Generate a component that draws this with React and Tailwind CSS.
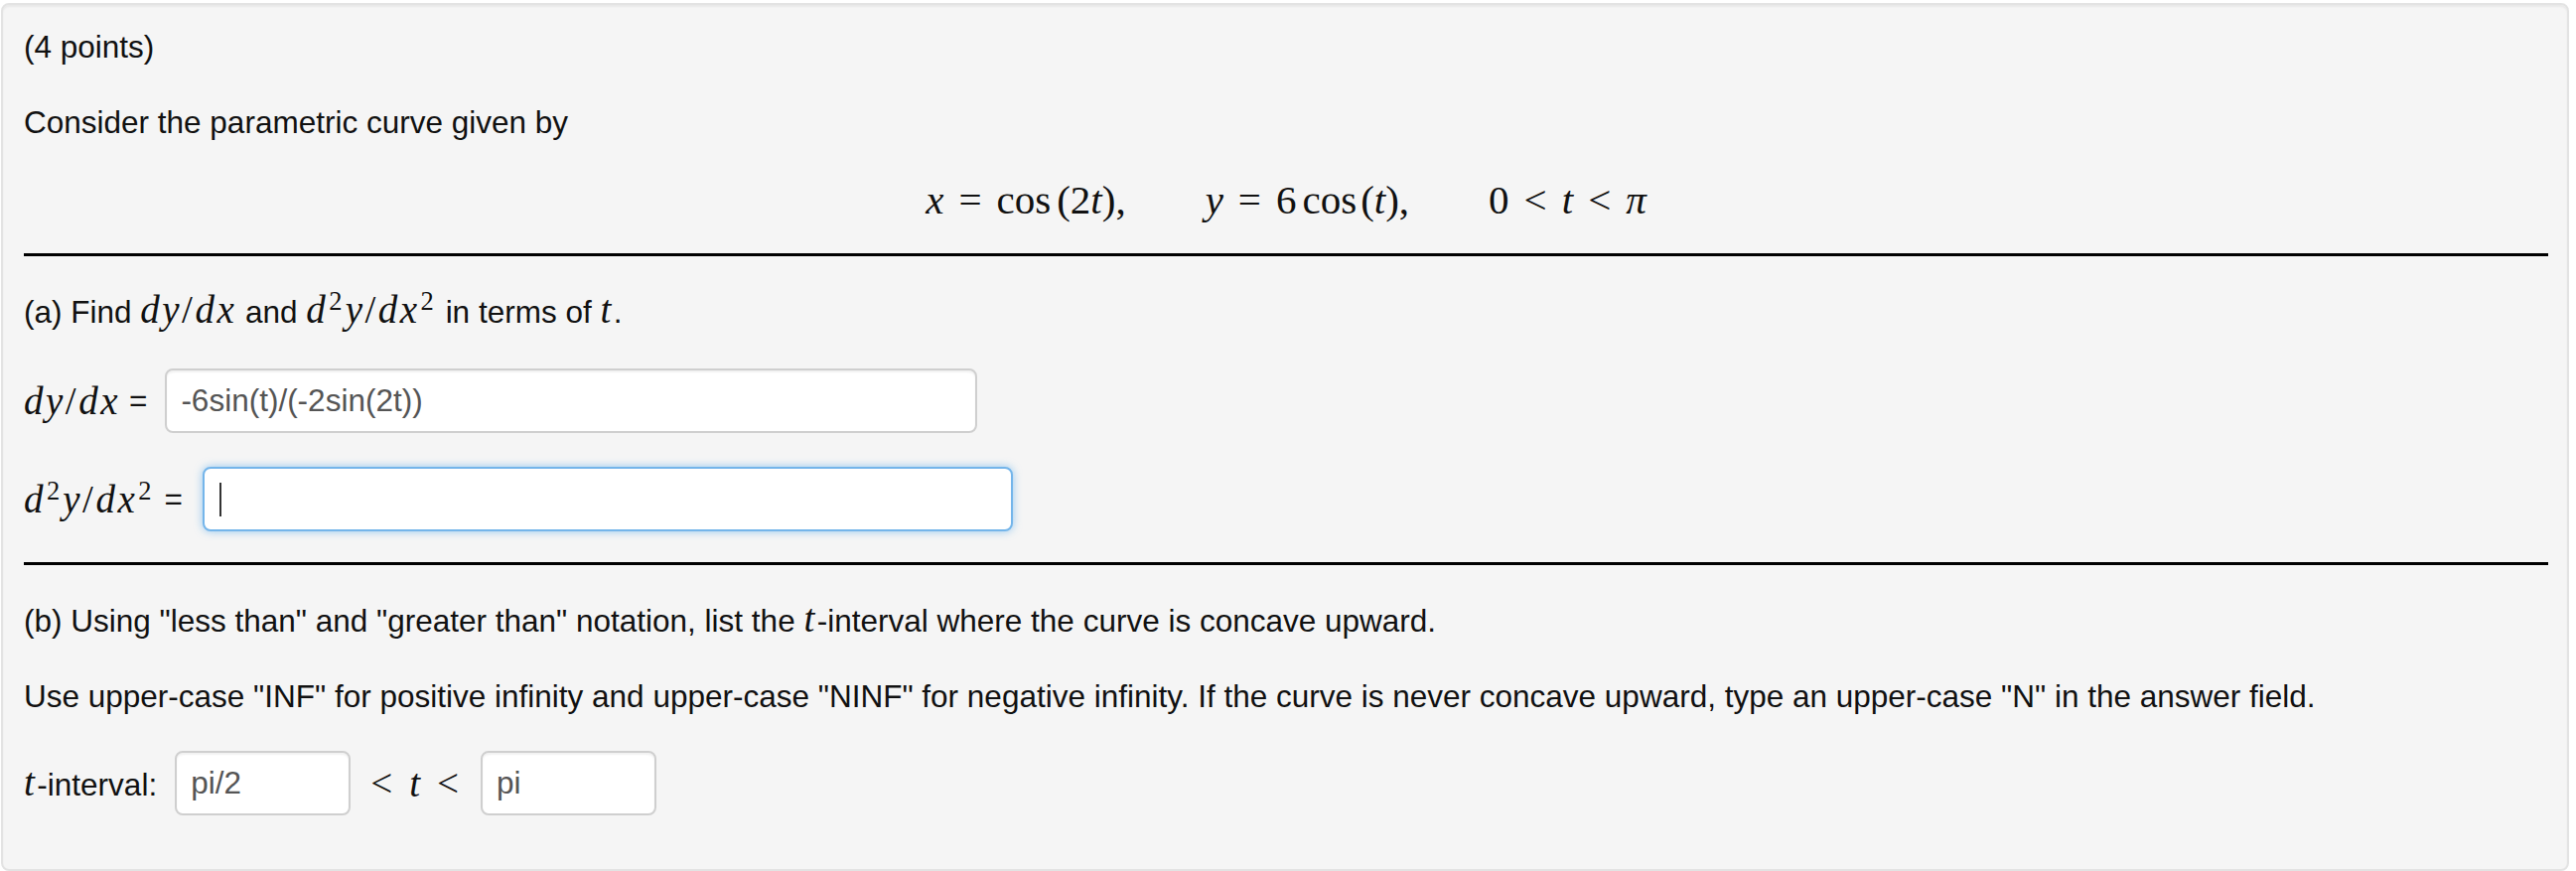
const sans = "font-['Liberation_Sans',Arial,sans-serif]";
const serif = "font-['Liberation_Serif','Times_New_Roman',serif]";

// inline math: italic variables in a serif face
const M = ({ children, className = "" }) => (
  <span className={`${serif} text-[39px] tracking-[2.5px] ${className}`}>{children}</span>
);
const V = ({ children }) => <i>{children}</i>;
const Sq = () => <sup className="ml-[1px] mr-[3px] text-[0.68em] tracking-normal">2</sup>;

const AnswerBox = ({ value, width, focused = false }) => (
  <div
    className={`flex h-[65px] items-center rounded-[8px] border-2 bg-white px-[14px] text-[31.5px] text-[#555] ${width} ${
      focused
        ? "border-[#74b5ea] shadow-[0_0_9px_rgba(82,168,236,0.6)]"
        : "border-[#cfcfcf] shadow-[inset_0_2px_2px_rgba(0,0,0,0.06)]"
    }`}
  >
    {value}
    {focused && <span className="ml-[1px] h-[34px] w-[2px] bg-[#333]" />}
  </div>
);

const Rule = ({ className = "" }) => <div className={`h-[3px] bg-black ${className}`} />;

export default function App() {
  return (
    <div className={`min-h-screen bg-white pl-[1px] pr-[7px] pt-[3px] ${sans}`}>
      <div className="rounded-[8px] border-2 border-[#e3e3e3] bg-[#f5f5f5] pb-[54px] pl-[21px] pr-[19px] pt-[20px] text-[31.5px] leading-[45px] text-[#111] shadow-[inset_0_2px_2px_rgba(0,0,0,0.05)]">
        <p>(4 points)</p>
        <p className="mt-[31px]">Consider the parametric curve given by</p>

        {/* display equation */}
        <div className={`mt-[33px] flex h-[45px] items-center justify-center ${serif} text-[41px]`}>
          <span>
            <V>x</V>
            <span className="mx-[15px]">=</span>
            cos<span className="ml-[6px]">(2<V>t</V>),</span>
          </span>
          <span className="ml-[80px]">
            <V>y</V>
            <span className="mx-[15px]">=</span>6<span className="ml-[6px]">cos</span>
            <span className="ml-[4px]">(<V>t</V>),</span>
          </span>
          <span className="ml-[80px]">
            0<span className="mx-[15px]">&lt;</span>
            <V>t</V>
            <span className="mx-[15px]">&lt;</span>
            <V>π</V>
          </span>
        </div>

        <Rule className="mt-[31px]" />

        <p className="mt-[31px]">
          (a) Find{" "}
          <M>
            <V>dy</V>/<V>dx</V>
          </M>{" "}
          and{" "}
          <M>
            <V>d</V>
            <Sq />
            <V>y</V>/<V>dx</V>
            <Sq />
          </M>{" "}
          in terms of <M><V>t</V></M>.
        </p>

        <div className="mt-[34px] flex items-center">
          <M>
            <V>dy</V>/<V>dx</V>
          </M>
          <span className="ml-[9px] mr-[18px]">=</span>
          <AnswerBox value="-6sin(t)/(-2sin(2t))" width="w-[818px]" />
        </div>

        <div className="mt-[34px] flex items-center">
          <M>
            <V>d</V>
            <Sq />
            <V>y</V>/<V>dx</V>
            <Sq />
          </M>
          <span className="ml-[10px] mr-[20px]">=</span>
          <AnswerBox value="" width="w-[816px]" focused />
        </div>

        <Rule className="mt-[31px]" />

        <p className="mt-[31px]">
          (b) Using "less than" and "greater than" notation, list the <M><V>t</V></M>-interval where the
          curve is concave upward.
        </p>
        <p className="mt-[31px]">
          Use upper-case "INF" for positive infinity and upper-case "NINF" for negative infinity. If the
          curve is never concave upward, type an upper-case "N" in the answer field.
        </p>

        <div className="mt-[32px] flex items-center">
          <span>
            <M>
              <V>t</V>
            </M>
            -interval:
          </span>
          <div className="ml-[18px]">
            <AnswerBox value="pi/2" width="w-[177px]" />
          </div>
          <M className="ml-[20px] mr-[22px] tracking-normal">
            &lt;<span className="mx-[17px]"><V>t</V></span>&lt;
          </M>
          <AnswerBox value="pi" width="w-[177px]" />
        </div>
      </div>
    </div>
  );
}
